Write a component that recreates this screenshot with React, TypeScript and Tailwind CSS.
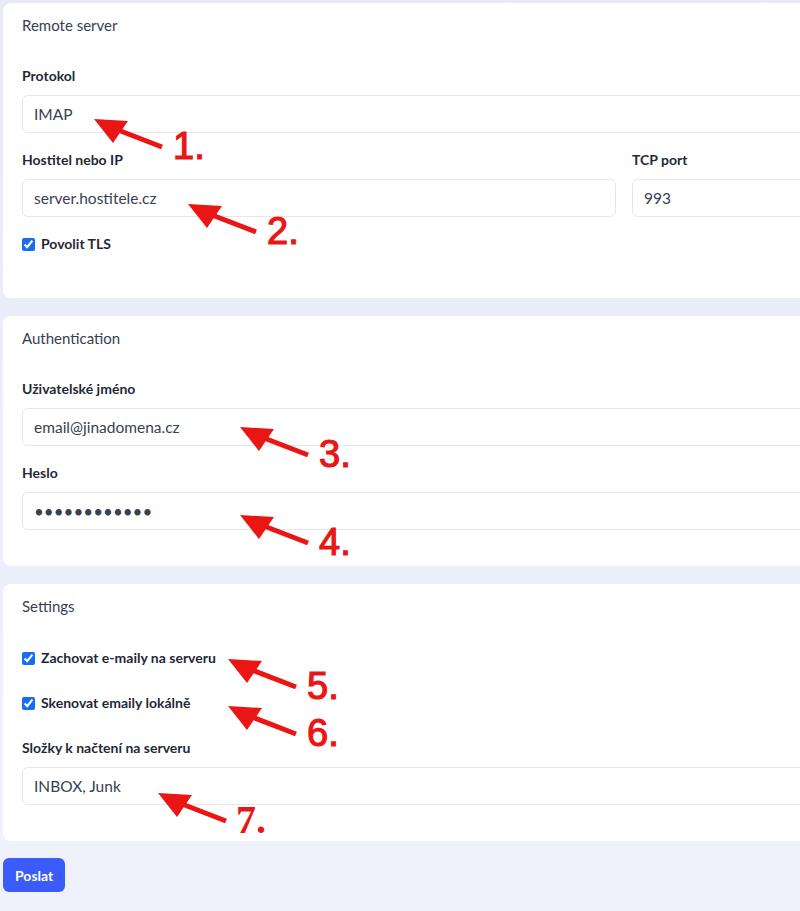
import React from "react";

const font = { fontFamily: "Lato, 'Noto Sans', sans-serif" };

function Arrow({ x, y, n, serif }: { x: number; y: number; n: string; serif?: boolean }) {
  return (
    <div className="absolute pointer-events-none" style={{ left: x, top: y }}>
      <svg className="absolute" style={{ left: -2, top: -2 }} width="80" height="40" viewBox="0 0 80 40">
        <polygon points="2,2 36,4 21,26" fill="#ea1616" />
        <line x1="26" y1="13" x2="70" y2="30" stroke="#ea1616" strokeWidth="5" />
      </svg>
      {serif ? (
        <div
          className="absolute text-[40px] leading-[40px] font-bold text-[#ea1616] font-['Liberation_Serif',serif]"
          style={{ left: 78, top: 7 }}
        >
          {n}
        </div>
      ) : (
        <div
          className="absolute text-[38px] leading-[38px] font-normal text-[#ea1616] font-['Liberation_Sans',sans-serif] [-webkit-text-stroke:1.2px_#ea1616]"
          style={{ left: 79, top: 8 }}
        >
          {n}
        </div>
      )}
    </div>
  );
}

function Field({ label, value, type }: { label: string; value: string; type?: string }) {
  const pw = type === "password";
  return (
    <div className="flex flex-col gap-[10px]">
      <div className="text-[14px] leading-[18px] font-bold text-[#1f2937]">{label}</div>
      <input
        readOnly
        type={type || "text"}
        value={value}
        className={`block w-full h-[38px] rounded-[6px] border border-[#e5e7eb] bg-white px-[11px] text-[#374151] outline-none ${pw ? "text-[17px] tracking-[0px] text-[#1f2937]" : "text-[15.5px]"}`}
        style={font}
      />
    </div>
  );
}

function Check({ label }: { label: string }) {
  return (
    <label className="flex items-center gap-[6px] h-[18px]">
      <input type="checkbox" checked readOnly className="m-0 w-[13px] h-[13px] accent-[#1a6cf0]" />
      <span className="text-[14px] leading-[18px] font-bold text-[#1f2937]">{label}</span>
    </label>
  );
}

function Card({ title, children, body }: { title: string; children: React.ReactNode; body: string }) {
  return (
    <section className="w-[860px] rounded-[8px] bg-white px-[19px] pt-[12px] flex flex-col gap-[32px]">
      <h2 className="text-[15px] leading-[20px] text-[#374151]">{title}</h2>
      <div className={`flex flex-col ${body}`}>{children}</div>
    </section>
  );
}

export default function App() {
  return (
    <div
      className="relative w-[800px] h-[911px] overflow-hidden bg-gradient-to-b from-[#e8ebf6] to-[#eff2fb] pl-[3px] pt-[3px] flex flex-col items-start gap-[17px]"
      style={font}
    >
      <div className="flex flex-col gap-[18px]">
        <Card title="Remote server" body="gap-[18px] pb-[45px]">
          <Field label="Protokol" value="IMAP" />
          <div className="grid grid-cols-[594px_1fr] gap-[16px]">
            <Field label="Hostitel nebo IP" value="server.hostitele.cz" />
            <Field label="TCP port" value="993" />
          </div>
          <Check label="Povolit TLS" />
        </Card>

        <Card title="Authentication" body="gap-[18px] pb-[36px]">
          <Field label="Uživatelské jméno" value="email@jinadomena.cz" />
          <Field label="Heslo" value="heslo1234567" type="password" />
        </Card>

        <Card title="Settings" body="gap-[27px] pb-[36px] pt-[1px]">
          <Check label="Zachovat e-maily na serveru" />
          <Check label="Skenovat emaily lokálně" />
          <Field label="Složky k načtení na serveru" value="INBOX, Junk" />
        </Card>
      </div>

      <button className="h-[34px] rounded-[6px] bg-[#3b5bfb] px-[12px] text-[14px] font-bold text-white">
        Poslat
      </button>

      <Arrow x={94} y={119} n="1." />
      <Arrow x={188} y={204} n="2." />
      <Arrow x={240} y={427} n="3." />
      <Arrow x={240} y={515} n="4." />
      <Arrow x={228} y={659} n="5." />
      <Arrow x={228} y={706} n="6." />
      <Arrow x={158} y={793} n="7." serif />
    </div>
  );
}
